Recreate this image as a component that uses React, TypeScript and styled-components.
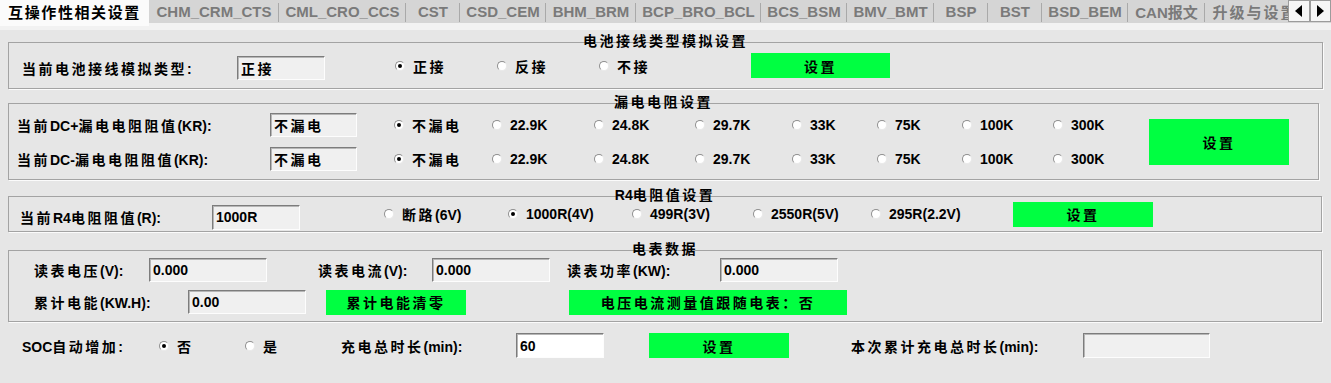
import React from "react"
import styled, { createGlobalStyle } from "styled-components"

const GlobalStyle = createGlobalStyle`
  * { box-sizing: border-box; }
  html, body { margin: 0; padding: 0; }
  body {
    background: #e6e6e6;
    font-family: "Liberation Sans", "Noto Sans CJK SC", sans-serif;
    font-size: 14px;
    font-weight: 700;
    color: #000;
  }
`

const Page = styled.div`
  width: 1331px;
  height: 383px;
  overflow: hidden;
  background: #e6e6e6;
`

const TabBar = styled.div`
  display: flex;
  align-items: flex-start;
  height: 23px;
  background: #d5d5d5;
`

const TabList = styled.div`
  display: flex;
  align-items: flex-start;
  flex: 1;
  min-width: 0;
  height: 26px;
  overflow: hidden;
  position: relative;
  z-index: 1;
`

const Tab = styled.div<{ $w: number; $active?: boolean }>`
  position: relative;
  flex: none;
  width: ${(p) => p.$w}px;
  height: ${(p) => (p.$active ? 26 : 23)}px;
  padding-bottom: ${(p) => (p.$active ? 3 : 0)}px;
  display: flex;
  align-items: center;
  justify-content: center;
  font-size: 15px;
  white-space: nowrap;
  color: ${(p) => (p.$active ? "#000" : "#7a7a7a")};
  background: ${(p) => (p.$active ? "#fbfbfb" : "transparent")};

  &::after {
    content: "";
    display: ${(p) => (p.$active ? "none" : "block")};
    position: absolute;
    right: 0;
    top: 3px;
    bottom: 1px;
    width: 1px;
    background: #a9a9a9;
  }
`

const Arrows = styled.div`
  display: flex;
  flex: none;
  width: 43px;
  height: 22px;
`

const ArrowBtn = styled.div`
  flex: 1;
  display: flex;
  align-items: center;
  justify-content: center;
  background: #f6f6f6;
  border: 1px solid #9c9c9c;
`

const Tri = styled.span<{ $dir: "left" | "right" }>`
  width: 0;
  height: 0;
  border-top: 6px solid transparent;
  border-bottom: 6px solid transparent;
  ${(p) =>
    p.$dir === "left"
      ? "border-right: 7px solid #000;"
      : "border-left: 7px solid #000;"}
`

const Panel = styled.div`
  border-top: 7px solid #f2f2f2;
`

const Group = styled.div<{ $w: number; $h: number; $mt: number }>`
  position: relative;
  display: flex;
  align-items: center;
  margin: ${(p) => p.$mt}px 0 0 8px;
  width: ${(p) => p.$w}px;
  height: ${(p) => p.$h}px;
  border: 1px solid #a3a3a3;
  box-shadow: 1px 1px 0 #fbfbfb;
`

const Legend = styled.div`
  position: absolute;
  top: -10px;
  left: 0;
  right: 0;
  line-height: 16px;
  text-align: center;
  white-space: nowrap;
  pointer-events: none;
`

const Col = styled.div`
  display: flex;
  flex-direction: column;
  flex: none;
`

const Row = styled.div<{ $h: number; $pl?: number; $mt?: number }>`
  display: flex;
  align-items: center;
  flex: none;
  height: ${(p) => p.$h}px;
  padding-left: ${(p) => p.$pl ?? 0}px;
  margin-top: ${(p) => p.$mt ?? 0}px;
`

const Label = styled.div<{ $w: number; $mt?: number }>`
  flex: none;
  width: ${(p) => p.$w}px;
  margin-top: ${(p) => p.$mt ?? 0}px;
  white-space: nowrap;
`

const Field = styled.div<{
  $w: number
  $h?: number
  $mr?: number
  $mt?: number
  $white?: boolean
}>`
  flex: none;
  display: flex;
  align-items: center;
  width: ${(p) => p.$w}px;
  height: ${(p) => p.$h ?? 24}px;
  margin-right: ${(p) => p.$mr ?? 0}px;
  margin-top: ${(p) => p.$mt ?? 0}px;
  padding-left: 3px;
  background: ${(p) => (p.$white ? "#ffffff" : "#f0f0f0")};
  border-top: 1px solid #7c7c7c;
  border-left: 1px solid #7c7c7c;
  border-right: 1px solid #fdfdfd;
  border-bottom: 1px solid #fdfdfd;
  box-shadow: inset 1px 1px 0 #b6b6b6;
  white-space: nowrap;
`

const RadioItem = styled.div<{ $w: number }>`
  flex: none;
  display: flex;
  align-items: center;
  gap: 8px;
  width: ${(p) => p.$w}px;
  white-space: nowrap;
`

const Dot = styled.span<{ $on?: boolean }>`
  position: relative;
  flex: none;
  width: 10px;
  height: 10px;
  border-radius: 50%;
  border: 1px solid;
  border-color: #8e8e8e #e9e9e9 #e9e9e9 #8e8e8e;
  background: #ffffff;

  &::after {
    content: "";
    display: ${(p) => (p.$on ? "block" : "none")};
    position: absolute;
    left: 2px;
    top: 2px;
    width: 4px;
    height: 4px;
    border-radius: 50%;
    background: #000;
  }
`

const GreenButton = styled.div<{ $w: number; $h: number; $mr?: number }>`
  flex: none;
  display: flex;
  align-items: center;
  justify-content: center;
  width: ${(p) => p.$w}px;
  height: ${(p) => p.$h}px;
  margin-right: ${(p) => p.$mr ?? 0}px;
  background: #00ff41;
  white-space: nowrap;
`

const Han = styled.span<{ $sp: number }>`
  letter-spacing: ${(p) => p.$sp}px;
`

// CJK runs get extra tracking, latin stays tight
function Txt({ s, sp = 2.5 }: { s: string; sp?: number }) {
  const parts = s.split(/([\u2e80-\u9fff\uff00-\uffef]+)/)
  return (
    <>
      {parts.map((part, i) =>
        i % 2 ? (
          <Han key={i} $sp={sp}>
            {part}
          </Han>
        ) : (
          part
        )
      )}
    </>
  )
}

function Radio({ w, text, on }: { w: number; text: string; on?: boolean }) {
  return (
    <RadioItem $w={w}>
      <Dot $on={on} />
      <span>
        <Txt s={text} />
      </span>
    </RadioItem>
  )
}

const tabs = [
  { name: "互操作性相关设置", w: 149, sp: 1.6, active: true },
  { name: "CHM_CRM_CTS", w: 130 },
  { name: "CML_CRO_CCS", w: 127 },
  { name: "CST", w: 54 },
  { name: "CSD_CEM", w: 86 },
  { name: "BHM_BRM", w: 90 },
  { name: "BCP_BRO_BCL", w: 125 },
  { name: "BCS_BSM", w: 86 },
  { name: "BMV_BMT", w: 87 },
  { name: "BSP", w: 54 },
  { name: "BST", w: 54 },
  { name: "BSD_BEM", w: 86 },
  { name: "CAN报文", w: 77, sp: 0 },
  { name: "升级与设置", w: 100, sp: 2 },
]

const leakOptions = [
  { t: "不漏电", w: 98 },
  { t: "22.9K", w: 102 },
  { t: "24.8K", w: 101 },
  { t: "29.7K", w: 97 },
  { t: "33K", w: 85 },
  { t: "75K", w: 85 },
  { t: "100K", w: 91 },
  { t: "300K", w: 96 },
]

const r4Options = [
  { t: "断路(6V)", w: 124 },
  { t: "1000R(4V)", w: 124, on: true },
  { t: "499R(3V)", w: 121 },
  { t: "2550R(5V)", w: 118 },
  { t: "295R(2.2V)", w: 142 },
]

function LeakRow({ label }: { label: string }) {
  return (
    <Row $h={34}>
      <Label $w={253}>
        <Txt s={label} />
      </Label>
      <Field $w={87} $mr={37}>
        <Txt s="不漏电" />
      </Field>
      {leakOptions.map((o, i) => (
        <Radio key={o.t} w={o.w} text={o.t} on={i === 0} />
      ))}
    </Row>
  )
}

export default function App() {
  return (
    <Page>
      <GlobalStyle />
      <TabBar>
        <TabList>
          {tabs.map((t) => (
            <Tab key={t.name} $w={t.w} $active={t.active}>
              <span>
                <Txt s={t.name} sp={t.sp ?? 1.6} />
              </span>
            </Tab>
          ))}
        </TabList>
        <Arrows>
          <ArrowBtn>
            <Tri $dir="left" />
          </ArrowBtn>
          <ArrowBtn>
            <Tri $dir="right" />
          </ArrowBtn>
        </Arrows>
      </TabBar>

      <Panel>
        <Group $w={1315} $h={47} $mt={12}>
          <Legend>
            <Txt s="电池接线类型模拟设置" />
          </Legend>
          <Row $h={45} $pl={13}>
            <Label $w={215} $mt={4}>
              <Txt s="当前电池接线模拟类型:" />
            </Label>
            <Field $w={88} $mr={70} $mt={4}>
              <Txt s="正接" />
            </Field>
            <Radio w={102} text="正接" on />
            <Radio w={102} text="反接" />
            <Radio w={152} text="不接" />
            <GreenButton $w={139} $h={25}>
              <Txt s="设置" />
            </GreenButton>
          </Row>
        </Group>

        <Group $w={1311} $h={77} $mt={14}>
          <Legend>
            <Txt s="漏电电阻设置" />
          </Legend>
          <Col style={{ paddingLeft: 8 }}>
            <LeakRow label="当前DC+漏电电阻阻值(KR):" />
            <LeakRow label="当前DC-漏电电阻阻值(KR):" />
          </Col>
          <GreenButton $w={140} $h={46}>
            <Txt s="设置" />
          </GreenButton>
        </Group>

        <Group $w={1314} $h={36} $mt={16}>
          <Legend>
            <Txt s="R4电阻值设置" />
          </Legend>
          <Row $h={34} $pl={11}>
            <Label $w={192} $mt={6}>
              <Txt s="当前R4电阻阻值(R):" />
            </Label>
            <Field $w={88} $h={25} $mr={84} $mt={6}>
              1000R
            </Field>
            {r4Options.map((o) => (
              <Radio key={o.t} w={o.w} text={o.t} on={o.on} />
            ))}
            <GreenButton $w={140} $h={25}>
              <Txt s="设置" />
            </GreenButton>
          </Row>
        </Group>

        <Group $w={1314} $h={72} $mt={18}>
          <Legend>
            <Txt s="电表数据" />
          </Legend>
          <Col>
            <Row $h={32} $pl={25}>
              <Label $w={115}>
                <Txt s="读表电压(V):" />
              </Label>
              <Field $w={118} $mr={51}>
                0.000
              </Field>
              <Label $w={114}>
                <Txt s="读表电流(V):" />
              </Label>
              <Field $w={118} $mr={17}>
                0.000
              </Field>
              <Label $w={153}>
                <Txt s="读表功率(KW):" />
              </Label>
              <Field $w={118}>0.000</Field>
            </Row>
            <Row $h={32} $pl={25}>
              <Label $w={154}>
                <Txt s="累计电能(KW.H):" />
              </Label>
              <Field $w={118} $mr={20}>
                0.00
              </Field>
              <GreenButton $w={140} $h={25} $mr={103}>
                <Txt s="累计电能清零" />
              </GreenButton>
              <GreenButton $w={278} $h={25}>
                <Txt s="电压电流测量值跟随电表：否" />
              </GreenButton>
            </Row>
          </Col>
        </Group>

        <Row $h={25} $pl={22} $mt={11}>
          <Label $w={137}>
            <Txt s="SOC自动增加:" />
          </Label>
          <Radio w={86} text="否" on />
          <Radio w={96} text="是" />
          <Label $w={175}>
            <Txt s="充电总时长(min):" />
          </Label>
          <Field $w={88} $h={25} $mr={45} $white>
            60
          </Field>
          <GreenButton $w={140} $h={25} $mr={62}>
            <Txt s="设置" />
          </GreenButton>
          <Label $w={232}>
            <Txt s="本次累计充电总时长(min):" />
          </Label>
          <Field $w={127} $h={25} />
        </Row>
      </Panel>
    </Page>
  )
}
